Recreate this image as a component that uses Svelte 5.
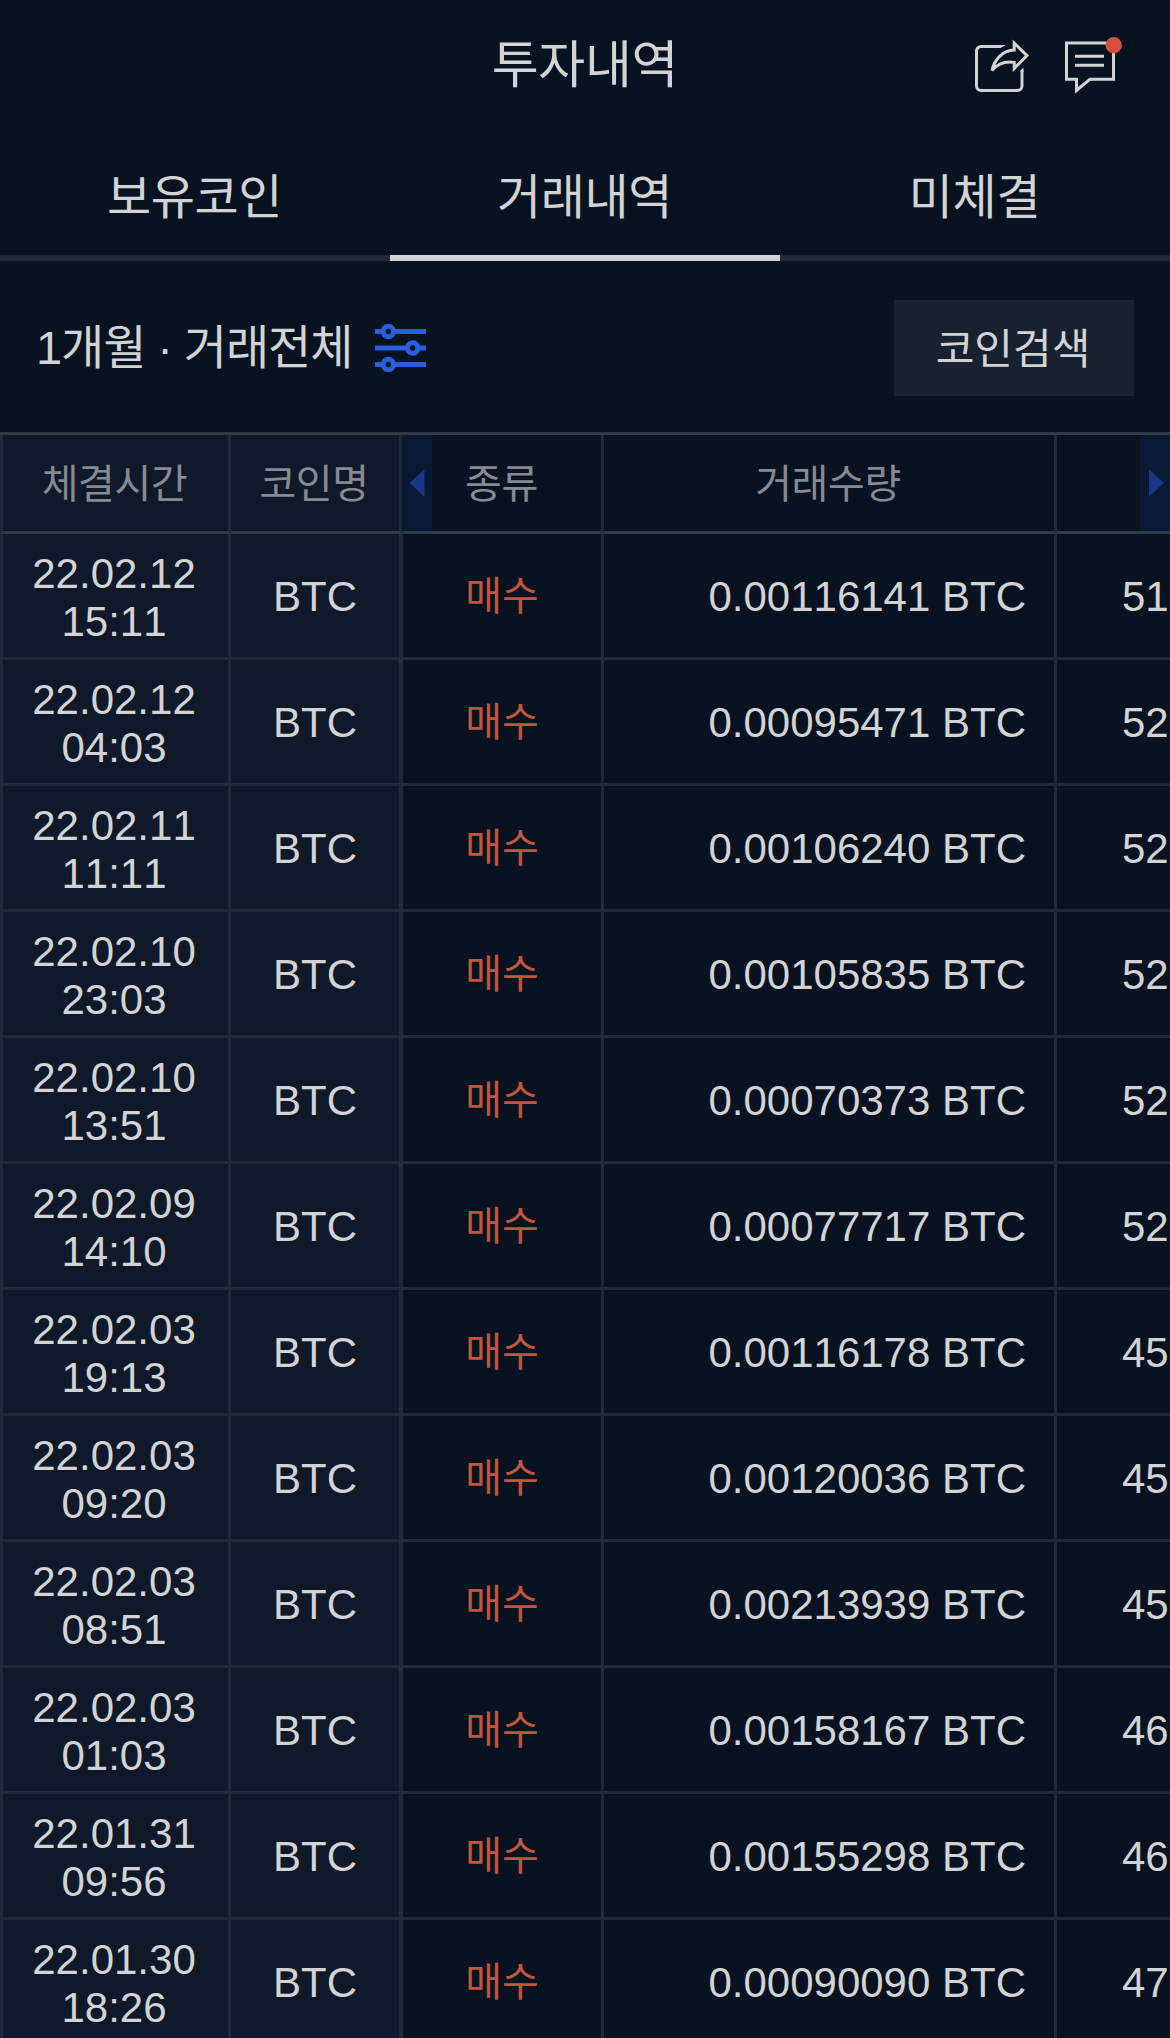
<script lang="ts">
    let tabs = $state([
        { id: 'holdings', label: '보유코인' },
        { id: 'trades', label: '거래내역' },
        { id: 'pending', label: '미체결' }
    ])
    let activeTab = $state('trades')

    const trades = [
        { date: '22.02.12', time: '15:11', amount: '0.00116141', price: '51' },
        { date: '22.02.12', time: '04:03', amount: '0.00095471', price: '52' },
        { date: '22.02.11', time: '11:11', amount: '0.00106240', price: '52' },
        { date: '22.02.10', time: '23:03', amount: '0.00105835', price: '52' },
        { date: '22.02.10', time: '13:51', amount: '0.00070373', price: '52' },
        { date: '22.02.09', time: '14:10', amount: '0.00077717', price: '52' },
        { date: '22.02.03', time: '19:13', amount: '0.00116178', price: '45' },
        { date: '22.02.03', time: '09:20', amount: '0.00120036', price: '45' },
        { date: '22.02.03', time: '08:51', amount: '0.00213939', price: '45' },
        { date: '22.02.03', time: '01:03', amount: '0.00158167', price: '46' },
        { date: '22.01.31', time: '09:56', amount: '0.00155298', price: '46' },
        { date: '22.01.30', time: '18:26', amount: '0.00090090', price: '47' }
    ]
</script>

<main>
    <header>
        <h1>투자내역</h1>
        <div class="actions">
            <button aria-label="공유">
                <svg width="56" height="56" viewBox="0 0 56 56">
                    <path d="M26.500 8.500H7a4.500 4.500 0 0 0-4.500 4.500V48a4.500 4.500 0 0 0 4.500 4.500H43.500a4.500 4.500 0 0 0 4.500-4.500V32.500" />
                    <path class="solid" d="M26 7H32L26.500 10H26ZM46.500 34V32.500L49.500 29.500V34Z" />
                    <path d="M40.200 5 53 17.600 40.200 30.500V24.500C31 23 24 25.500 18 32.500C20.500 21 29 12.500 40.200 12Z" />
                </svg>
            </button>
            <button aria-label="메시지">
                <svg width="60" height="60" viewBox="0 0 60 60">
                    <path d="M3.500 7H50.500V43.200H27L13.500 54.500V43.200H3.500Z" />
                    <path d="M12 20.300H41M12 29.300H41" />
                    <circle cx="50.700" cy="9.300" r="8.200" />
                </svg>
            </button>
        </div>
    </header>

    <nav>
        {#each tabs as tab}
            <button class:active={tab.id === activeTab} onclick={() => activeTab = tab.id}>
                <span>{tab.label}</span>
            </button>
        {/each}
    </nav>

    <section class="filter">
        <button class="period">
            <span>1개월 · 거래전체</span>
            <svg width="52" height="50" viewBox="0 0 52 50">
                <path d="M0 8.500H7M19.500 8.500H51M0 25H32M43.500 25H51M0 41.500H7M19.500 41.500H51" />
                <circle cx="13.300" cy="8.500" r="5.200" />
                <circle cx="37.700" cy="25" r="5.200" />
                <circle cx="13.300" cy="41.500" r="5.200" />
            </svg>
        </button>
        <button class="search"><span>코인검색</span></button>
    </section>

    <section class="table">
        <div class="row head">
            <div class="fixed">체결시간</div>
            <div class="fixed coin">코인명</div>
            <div class="type">
                <i class="arrow left"></i>
                <span>종류</span>
            </div>
            <div>거래수량</div>
            <div class="last"><i class="arrow right"></i></div>
        </div>
        {#each trades as trade}
            <div class="row">
                <div class="fixed time">{trade.date}<br>{trade.time}</div>
                <div class="fixed coin">BTC</div>
                <div class="type buy">매수</div>
                <div class="amount">{trade.amount} BTC</div>
                <div class="price">{trade.price}</div>
            </div>
        {/each}
    </section>
</main>

<style>
    :global(body) {
        background: #081220;
    }
    main {
        width: 1170px;
        height: 2038px;
        overflow: hidden;
        background: #081220;
        color: #d2d3d4;
        font-family: "Liberation Sans", "Noto Sans CJK KR", sans-serif;
        font-kerning: none;
    }
    button {
        display: flex;
        align-items: center;
        justify-content: center;
        padding: 0;
        border: 0;
        background: none;
        color: inherit;
        font: inherit;
        font-kerning: none;
        cursor: pointer;
    }
    svg {
        display: block;
        fill: none;
        stroke: #d2d3d4;
        stroke-width: 3;
    }

    header {
        display: grid;
        grid-template-columns: 1fr auto 1fr;
        align-items: center;
        height: 132px;
    }
    h1 {
        grid-column: 2;
        margin: 0;
        font-size: 51px;
        font-weight: 400;
        line-height: 60px;
        letter-spacing: -0.3px;
    }
    .actions {
        display: flex;
        justify-content: flex-end;
        gap: 33px;
        padding-right: 47px;
    }
    .actions .solid {
        fill: #d2d3d4;
        stroke: none;
    }
    .actions circle {
        fill: #d94f3d;
        stroke: none;
    }

    nav {
        display: grid;
        grid-template-columns: repeat(3, 1fr);
        height: 129px;
    }
    nav button {
        padding: 9px 1px 0 0;
        border-bottom: 6px solid #1f2937;
        font-size: 48px;
        line-height: 60px;
        letter-spacing: -0.4px;
    }
    nav button.active {
        border-color: #d2d3d4;
    }

    .filter {
        display: flex;
        align-items: center;
        justify-content: space-between;
        box-sizing: border-box;
        height: 171px;
        padding: 3px 36px 0;
    }
    .period {
        gap: 23px;
        font-size: 47px;
        line-height: 60px;
        letter-spacing: -1.1px;
    }
    .period svg {
        stroke: #2860da;
        stroke-width: 5;
    }
    .search {
        box-sizing: border-box;
        width: 240px;
        height: 96px;
        padding: 0 2px 5px 0;
        background: #182130;
        font-size: 42px;
    }

    .table {
        border-top: 3px solid #313b48;
    }
    .row {
        display: grid;
        grid-template-columns: 231px 172px 201px 453px 300px;
        height: 126px;
        font-size: 42px;
        line-height: 48px;
    }
    .row > div {
        display: flex;
        align-items: center;
        justify-content: center;
        box-sizing: border-box;
        padding-top: 2px;
        border-right: 3px solid #1f2937;
        border-bottom: 3px solid #1f2937;
        text-align: center;
    }
    .row > .fixed {
        background: #101929;
    }
    .row > .fixed:first-child {
        border-left: 3px solid #1f2937;
    }
    .row > .time {
        padding: 4px 3px 0 0;
    }
    .row > .coin {
        border-right-width: 4px;
    }
    .row > .buy {
        padding-top: 0;
        color: #bf563d;
        font-size: 40px;
    }
    .row > .amount {
        justify-content: flex-end;
        padding-right: 28px;
    }
    .row > .price {
        justify-content: flex-start;
        padding-left: 65px;
    }

    .head {
        height: 99px;
        color: #858a93;
        font-size: 40px;
        letter-spacing: -0.4px;
    }
    .row.head > div {
        padding-right: 2px;
        border-bottom-color: #313b48;
    }
    .row.head > .type {
        padding: 0;
    }
    .head .type span {
        flex: 1;
        padding: 2px 30px 0 0;
    }
    .row.head > .last {
        justify-content: flex-start;
        padding: 0 0 0 83px;
    }
    .arrow {
        display: flex;
        align-items: center;
        justify-content: center;
        width: 30px;
        height: 96px;
        background: #0a1933;
    }
    .arrow.left {
        margin-left: -1px;
    }
    .arrow::before {
        content: "";
        width: 15px;
        height: 27px;
        background: #19378a;
    }
    .arrow.left::before {
        clip-path: polygon(100% 0, 100% 100%, 0 50%);
    }
    .arrow.right::before {
        margin-left: 3px;
        clip-path: polygon(0 0, 100% 50%, 0 100%);
    }
</style>
